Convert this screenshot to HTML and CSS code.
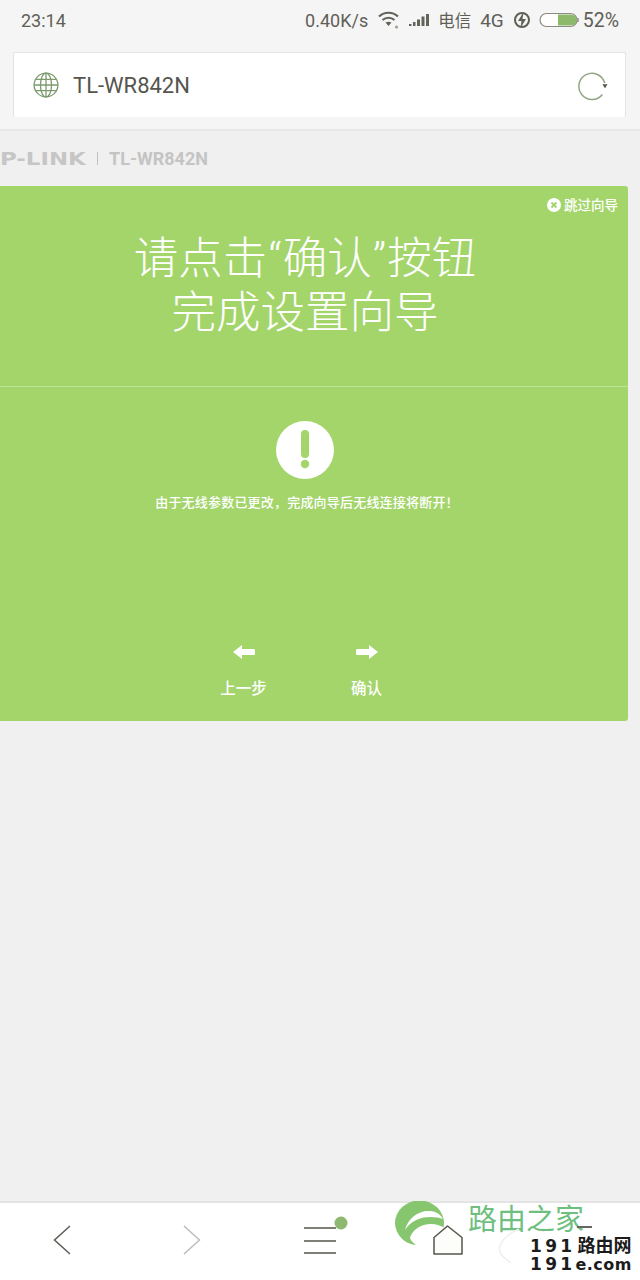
FILE: index.html
```html
<!DOCTYPE html>
<html lang="zh-CN">
<head>
<meta charset="utf-8">
<title>TL-WR842N</title>
<link rel="stylesheet" href="styles.css">
</head>
<body>
<div class="phone">
  <header class="top">
    <div class="status">
      <span class="time">23:14</span>
      <div class="status-right">
        <span class="speed">0.40K/s</span>
        <svg class="ic-wifi" width="22" height="18" viewBox="0 0 22 18"><g fill="none" stroke="#63635a" stroke-width="2.200"><path d="M1 5.500C6.500 .500 14.500 .500 20 5.500"/><path d="M4.500 9C8 6 13 6 16.500 9"/></g><path d="M7.500 11.500C9.500 10.500 11.500 10.500 13.500 11.500L10.500 15Z" fill="#63635a"/><circle cx="18.500" cy="16" r="1.500" fill="#9a9a90"/></svg>
        <svg class="ic-signal" width="21" height="14" viewBox="0 0 21 14"><g fill="#63635a"><rect x="0" y="11" width="2.500" height="2"/><rect x="4" y="9" width="2.500" height="4"/><rect x="8" y="6.500" width="3" height="6.500"/><rect x="12.500" y="3.500" width="3" height="9.500"/><rect x="17" y="1" width="3" height="12"/></g></svg>
        <span class="carrier">电信</span>
        <span class="net">4G</span>
        <svg class="ic-charge" width="18" height="18" viewBox="0 0 18 18"><circle cx="9" cy="9" r="7" fill="none" stroke="#5f5f55" stroke-width="2"/><path d="M10.500 1L5 10H8.500L7.500 17L13 8H9.500Z" fill="#5f5f55"/></svg>
        <svg class="ic-batt" width="40" height="16" viewBox="0 0 40 16"><rect x="1" y="1.500" width="37" height="13" rx="6.500" fill="#fff" stroke="#8c8c82" stroke-width="1.200"/><path d="M19 2.500H32a5.500 5.500 0 0 1 0 11H19Z" fill="#8db96b"/><rect x="38.200" y="6" width="1.500" height="4" fill="#8c8c82"/></svg>
        <span class="batt">52%</span>
      </div>
    </div>
    <div class="address">
      <svg class="ic-globe" width="26" height="26" viewBox="0 0 28 28"><g fill="none" stroke="#7d9a6e" stroke-width="1.400"><circle cx="14" cy="14" r="12.800"/><ellipse cx="14" cy="14" rx="6" ry="12.800"/><path d="M14 1V27M1 14H27M3 8H25M3 20H25"/></g></svg>
      <span class="url">TL-WR842N</span>
      <svg class="ic-reload" width="30" height="30" viewBox="0 0 32 32"><path d="M28.500 13A14 14 0 1 0 26 25" fill="none" stroke="#93a583" stroke-width="1.600"/><path d="M26 14H31.500L28.800 18.500Z" fill="#55554c"/></svg>
    </div>
  </header>

  <main class="page">
    <div class="brand">
      <span class="brand-logo">P-LINK</span>
      <span class="brand-sep"></span>
      <span class="brand-model">TL-WR842N</span>
    </div>

    <section class="card">
      <div class="card-head">
        <div class="skip">
          <svg class="ic-close" width="14" height="14" viewBox="0 0 15 15"><circle cx="7.500" cy="7.500" r="7.500" fill="#fff"/><path d="M4.800 4.800L10.200 10.200M10.200 4.800L4.800 10.200" stroke="#a3d56b" stroke-width="2"/></svg>
          <span>跳过向导</span>
        </div>
        <h1 class="title">请点击<span class="q">“</span>确认<span class="q">”</span>按钮<br>完成设置向导</h1>
      </div>
      <div class="card-body">
        <div class="alert">
          <svg width="58" height="58" viewBox="0 0 58 58"><circle cx="29" cy="29" r="29" fill="#fff"/><rect x="25" y="9" width="8" height="28" rx="4" fill="#a3d56b"/><circle cx="29" cy="43" r="4.200" fill="#a3d56b"/></svg>
        </div>
        <p class="note">由于无线参数已更改，完成向导后无线连接将断开！</p>
        <div class="actions">
          <div class="action">
            <svg width="22" height="14" viewBox="0 0 22 14"><path d="M0 7L9 0V4H20a3 3 0 0 1 0 6H9V14Z" fill="#fff"/></svg>
            <span>上一步</span>
          </div>
          <div class="action">
            <svg width="22" height="14" viewBox="0 0 22 14"><path d="M22 7L13 0V4H2a3 3 0 0 0 0 6H13V14Z" fill="#fff"/></svg>
            <span>确认</span>
          </div>
        </div>
      </div>
    </section>
  </main>

  <nav class="bottom">
    <svg class="nav-back" width="18" height="30" viewBox="0 0 18 30"><path d="M17 1L1.500 15L17 29" fill="none" stroke="#5c5c54" stroke-width="1.500"/></svg>
    <svg class="nav-forward" width="18" height="30" viewBox="0 0 18 30"><path d="M1 1L16.500 15L1 29" fill="none" stroke="#bdbdb8" stroke-width="1.500"/></svg>
    <svg class="nav-menu" width="44" height="40" viewBox="0 0 44 40"><g stroke="#55554c" stroke-width="1.500"><path d="M0 12H32M0 25H32M0 37H32"/></g><circle cx="37" cy="7" r="6.500" fill="#8cb870"/></svg>
    <svg class="nav-home" width="30" height="30" viewBox="0 0 30 30"><path d="M1 12.500L14.500 1L29 12.500V29H1Z" fill="#fdfdfb" stroke="#55554c" stroke-width="1.500" stroke-linejoin="round"/></svg>
  </nav>

  <div class="mark">
    <svg class="mark-logo" width="50" height="50" viewBox="0 0 50 50"><ellipse cx="24.500" cy="22" rx="24.500" ry="22.500" fill="#85c66f"/><path d="M10 29C13 17 24 9 35 10C41 10 46 14 48 18C40 15 20 13 10 29Z" fill="#fff"/><path d="M15 37C17 29 26 23 36 23C42 23 47 25 51 28V50H26C22 44 16 41 15 37Z" fill="#fff"/></svg>
    <span class="mark-cn">路由之家</span>
    <span class="mark-line"></span>
    <svg class="mark-arc" width="24" height="36" viewBox="0 0 24 36"><path d="M22 1C10 6 0 16 3 24C5 29 10 32 14 35" fill="none" stroke="#efefef" stroke-width="1.500"/></svg>
    <span class="mark-a"><span class="mark-num">191</span><span class="mark-cjk">路由网</span></span>
    <span class="mark-b"><span class="mark-num">191</span><span class="mark-dom">e.com</span></span>
  </div>
</div>
</body>
</html>
```
FILE: styles.css
```css
* { box-sizing: border-box; }
html, body { margin: 0; padding: 0; }
body { background: #f0f0f0; font-family: Roboto, "Noto Sans CJK SC", sans-serif; }
.phone { position: relative; width: 640px; height: 1280px; overflow: hidden; display: flex; flex-direction: column; }

.top { height: 131px; flex: none; background: #f5f5f5; border-bottom: 2px solid #e8e8e8; padding: 0 13px; }
.status { height: 40px; margin: 0 8px 12px 8px; display: flex; align-items: center; justify-content: space-between; color: #5f5f58; font-size: 18px; }
.status-right { display: flex; align-items: center; }
.speed { margin-right: 10px; }
.ic-wifi { margin-right: 9px; }
.ic-signal { margin-right: 8px; }
.carrier { font-size: 16.500px; margin-right: 9px; }
.net { font-size: 19px; margin-right: 9px; }
.ic-charge { margin-right: 8px; }
.ic-batt { margin-right: 4px; }
.batt { font-size: 19.500px; }

.address { height: 65px; width: 613px; background: #fff; border: 1px solid #e4e4e4; border-bottom: none; border-radius: 2px; display: flex; align-items: center; padding: 0 17px 0 19px; }
.ic-globe { margin-right: 14px; }
.url { font-size: 22px; color: #55554e; flex: 1; }
.ic-reload { margin-top: 1px; }

.page { flex: 1; display: flex; flex-direction: column; }
.brand { height: 55px; display: flex; align-items: center; font-weight: 700; padding-bottom: 1px; }
.brand-logo { font-family: "DejaVu Sans", sans-serif; font-size: 18px; width: 68px; transform: scaleX(1.27); transform-origin: left center; color: #c6c6c6; white-space: nowrap; }
.brand-sep { width: 1px; height: 13px; background: #c2c2c2; margin: 0 11px 0 29px; }
.brand-model { font-size: 18px; color: #c4c4c4; }

.card { width: 648px; height: 535px; margin-left: -20px; background: #a3d56b; border-radius: 3px; color: #fff; display: flex; flex-direction: column; }
.card-head { height: 201px; flex: none; border-bottom: 1px solid #bde39a; position: relative; }
.skip { position: absolute; top: 11px; right: 10px; display: flex; align-items: center; gap: 3px; font-size: 13.500px; font-weight: 500; line-height: 16px; }
.title { margin: 0; padding: 46px 0 0 2px; text-align: center; font-size: 44.500px; line-height: 54px; font-weight: 300; }
.q { padding: 0 1px; }
.card-body { flex: 1; display: flex; flex-direction: column; align-items: center; padding-left: 2px; }
.alert { margin-top: 34px; height: 58px; line-height: 0; }
.note { margin: 14px 0 0; padding-left: 4px; font-size: 13px; line-height: 20px; font-weight: 500; letter-spacing: .2px; }
.actions { margin-top: 132px; display: flex; gap: 79px; }
.action { width: 44px; display: flex; flex-direction: column; align-items: center; gap: 20px; font-size: 15.500px; line-height: 20px; font-weight: 500; white-space: nowrap; }

.bottom { height: 79px; flex: none; background: #fff; border-top: 2px solid #e4e4e4; display: flex; align-items: flex-start; padding-left: 53px; }
.nav-back { margin: 22px 112px 0 0; }
.nav-forward { margin: 22px 103px 0 0; }
.nav-menu { margin: 13px 85px 0 0; }
.nav-home { margin-top: 22px; position: relative; z-index: 2; }

.mark { position: absolute; left: 395px; top: 1200px; width: 245px; height: 80px; z-index: 1; }
.mark-logo { position: absolute; left: 0; top: 1px; }
.mark-cn { position: absolute; left: 73px; top: 2px; font-size: 29px; line-height: 30px; color: #6fbf80; font-family: "Noto Sans CJK SC", sans-serif; font-weight: 400; white-space: nowrap; }
.mark-line { position: absolute; left: 182px; top: 26px; width: 15px; height: 2px; background: #66665e; }
.mark-arc { position: absolute; left: 102px; top: 28px; }
.mark-a, .mark-b { position: absolute; left: 135px; color: #1c1c1c; font-family: "DejaVu Sans", sans-serif; font-weight: 700; font-size: 16px; line-height: 16px; white-space: nowrap; }
.mark-a { top: 36px; }
.mark-b { top: 56px; }
.mark-num { font-size: 17px; letter-spacing: 3.300px; }
.mark-cjk { font-family: "Noto Sans CJK SC", sans-serif; font-size: 18px; margin-left: 2px; }
.mark-dom { letter-spacing: .5px; }
```
